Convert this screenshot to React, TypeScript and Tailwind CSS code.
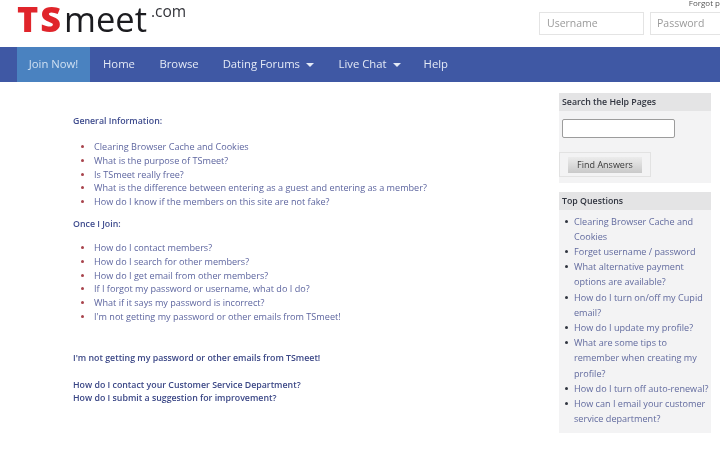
// Help page: top bar, nav, question lists and sidebar boxes.
const general = [
  "Clearing Browser Cache and Cookies",
  "What is the purpose of TSmeet?",
  "Is TSmeet really free?",
  "What is the difference between entering as a guest and entering as a member?",
  "How do I know if the members on this site are not fake?",
];

const joining = [
  "How do I contact members?",
  "How do I search for other members?",
  "How do I get email from other members?",
  "If I forgot my password or username, what do I do?",
  "What if it says my password is incorrect?",
  "I'm not getting my password or other emails from TSmeet!",
];

const top = [
  "Clearing Browser Cache and Cookies",
  "Forget username / password",
  "What alternative payment options are available?",
  "How do I turn on/off my Cupid email?",
  "How do I update my profile?",
  "What are some tips to remember when creating my profile?",
  "How do I turn off auto-renewal?",
  "How can I email your customer service department?",
];

function Caret() {
  return <span className="ml-[6px] inline-block h-0 w-0 border-x-[4px] border-t-[4px] border-x-transparent border-t-[#e4eaf6] align-middle" />;
}

function QuestionList({ items, className }: { items: string[]; className: string }) {
  return (
    <ul className={`flex flex-col pl-[21px] ${className}`}>
      {items.map((q) => (
        <li key={q} className="relative h-[13.8px] whitespace-nowrap text-[9.1px] leading-[13.8px] text-[#5d659f]">
          <span className="absolute left-[-13px] top-[5px] h-[3px] w-[3px] rounded-full bg-[#a8444c]" />
          {q}
        </li>
      ))}
    </ul>
  );
}

export default function App() {
  return (
    <div className="h-[450px] w-[720px] overflow-hidden bg-white font-['Open_Sans',sans-serif] blur-[0.6px]">
      <header className="flex h-[47px] items-start justify-between pl-[17px]">
        <div className="flex items-start">
          <span className="mt-[1px] text-[36px] font-extrabold leading-[36px] tracking-[2px] text-[#e0252b]">TS</span>
          <span className="ml-[1px] mt-[2.3px] text-[34.5px] font-normal leading-[34.5px] text-[#1b1b1f]">meet</span>
          <span className="ml-[4px] mt-[2px] text-[15.5px] leading-[18px] text-[#33343a]">.com</span>
        </div>
        <div className="flex flex-col items-end">
          <span className="h-[12px] overflow-hidden text-[8px] leading-[6px] text-[#555]">Forgot p</span>
          <div className="flex gap-[6px]">
            <div className="flex h-[23px] w-[105px] items-center border border-[#e4e4e4] pl-[7px] text-[10.5px] text-[#9a9a9a]">Username</div>
            <div className="flex h-[23px] w-[70px] items-center border border-r-0 border-[#e4e4e4] pl-[6px] text-[10.5px] text-[#9a9a9a]">Password</div>
          </div>
        </div>
      </header>

      <nav className="flex h-[35px] items-stretch bg-[#3f58a4] pl-[17px] text-[11.3px] text-[#e4eaf6]">
        <a className="flex w-[73px] items-center justify-center bg-[#4a82c0] text-[#cfe0f2]">Join Now!</a>
        <a className="ml-[13px] flex items-center">Home</a>
        <a className="ml-[24.5px] flex items-center">Browse</a>
        <a className="ml-[24px] flex items-center">Dating Forums<Caret /></a>
        <a className="ml-[24.5px] flex items-center">Live Chat<Caret /></a>
        <a className="ml-[23px] flex items-center">Help</a>
      </nav>

      <main className="flex items-start justify-between pl-[73px] pr-[9px] pt-[11px]">
        <section className="pt-[21px]">
          <h2 className="text-[8.8px] font-semibold leading-[14px] text-[#3f4c8e]">General Information:</h2>
          <QuestionList items={general} className="mt-[12px]" />
          <h2 className="mt-[8px] text-[8.8px] font-semibold leading-[14px] text-[#3f4c8e]">Once I Join:</h2>
          <QuestionList items={joining} className="mt-[10px]" />
          <div className="mt-[28px] flex flex-col text-[8.8px] font-semibold leading-[13.5px] text-[#3b4786]">
            <span>I'm not getting my password or other emails from TSmeet!</span>
            <span className="mt-[13.5px]">How do I contact your Customer Service Department?</span>
            <span>How do I submit a suggestion for improvement?</span>
          </div>
        </section>

        <aside className="flex w-[152px] flex-col gap-[9px]">
          <div className="h-[90px] bg-[#f3f3f4]">
            <h3 className="h-[18px] bg-[#e4e4e5] pl-[3px] text-[8.8px] font-semibold leading-[18px] text-[#30343f]">Search the Help Pages</h3>
            <div className="ml-[3px] mt-[8px] h-[19px] w-[113px] rounded-[2px] border border-[#9c9c9c] bg-white" />
            <div className="mt-[14px] flex h-[25px] w-[92px] items-center justify-center border border-[#e2e2e2]">
              <span className="flex h-[16px] w-[74px] items-center justify-center bg-gradient-to-b from-[#ececec] to-[#c9c9c9] text-[9px] text-[#3a3a3a]">Find Answers</span>
            </div>
          </div>
          <div className="h-[241px] bg-[#f3f3f4]">
            <h3 className="h-[18px] bg-[#e4e4e5] pl-[3px] text-[8.8px] font-semibold leading-[18px] text-[#30343f]">Top Questions</h3>
            <ul className="mt-[3.5px] flex flex-col pl-[15px]">
              {top.map((q) => (
                <li key={q} className="relative text-[9.1px] leading-[15.2px] text-[#616a9e]">
                  <span className="absolute left-[-9px] top-[6px] h-[3px] w-[3px] rounded-full bg-[#30343f]" />
                  {q}
                </li>
              ))}
            </ul>
          </div>
        </aside>
      </main>
    </div>
  );
}
